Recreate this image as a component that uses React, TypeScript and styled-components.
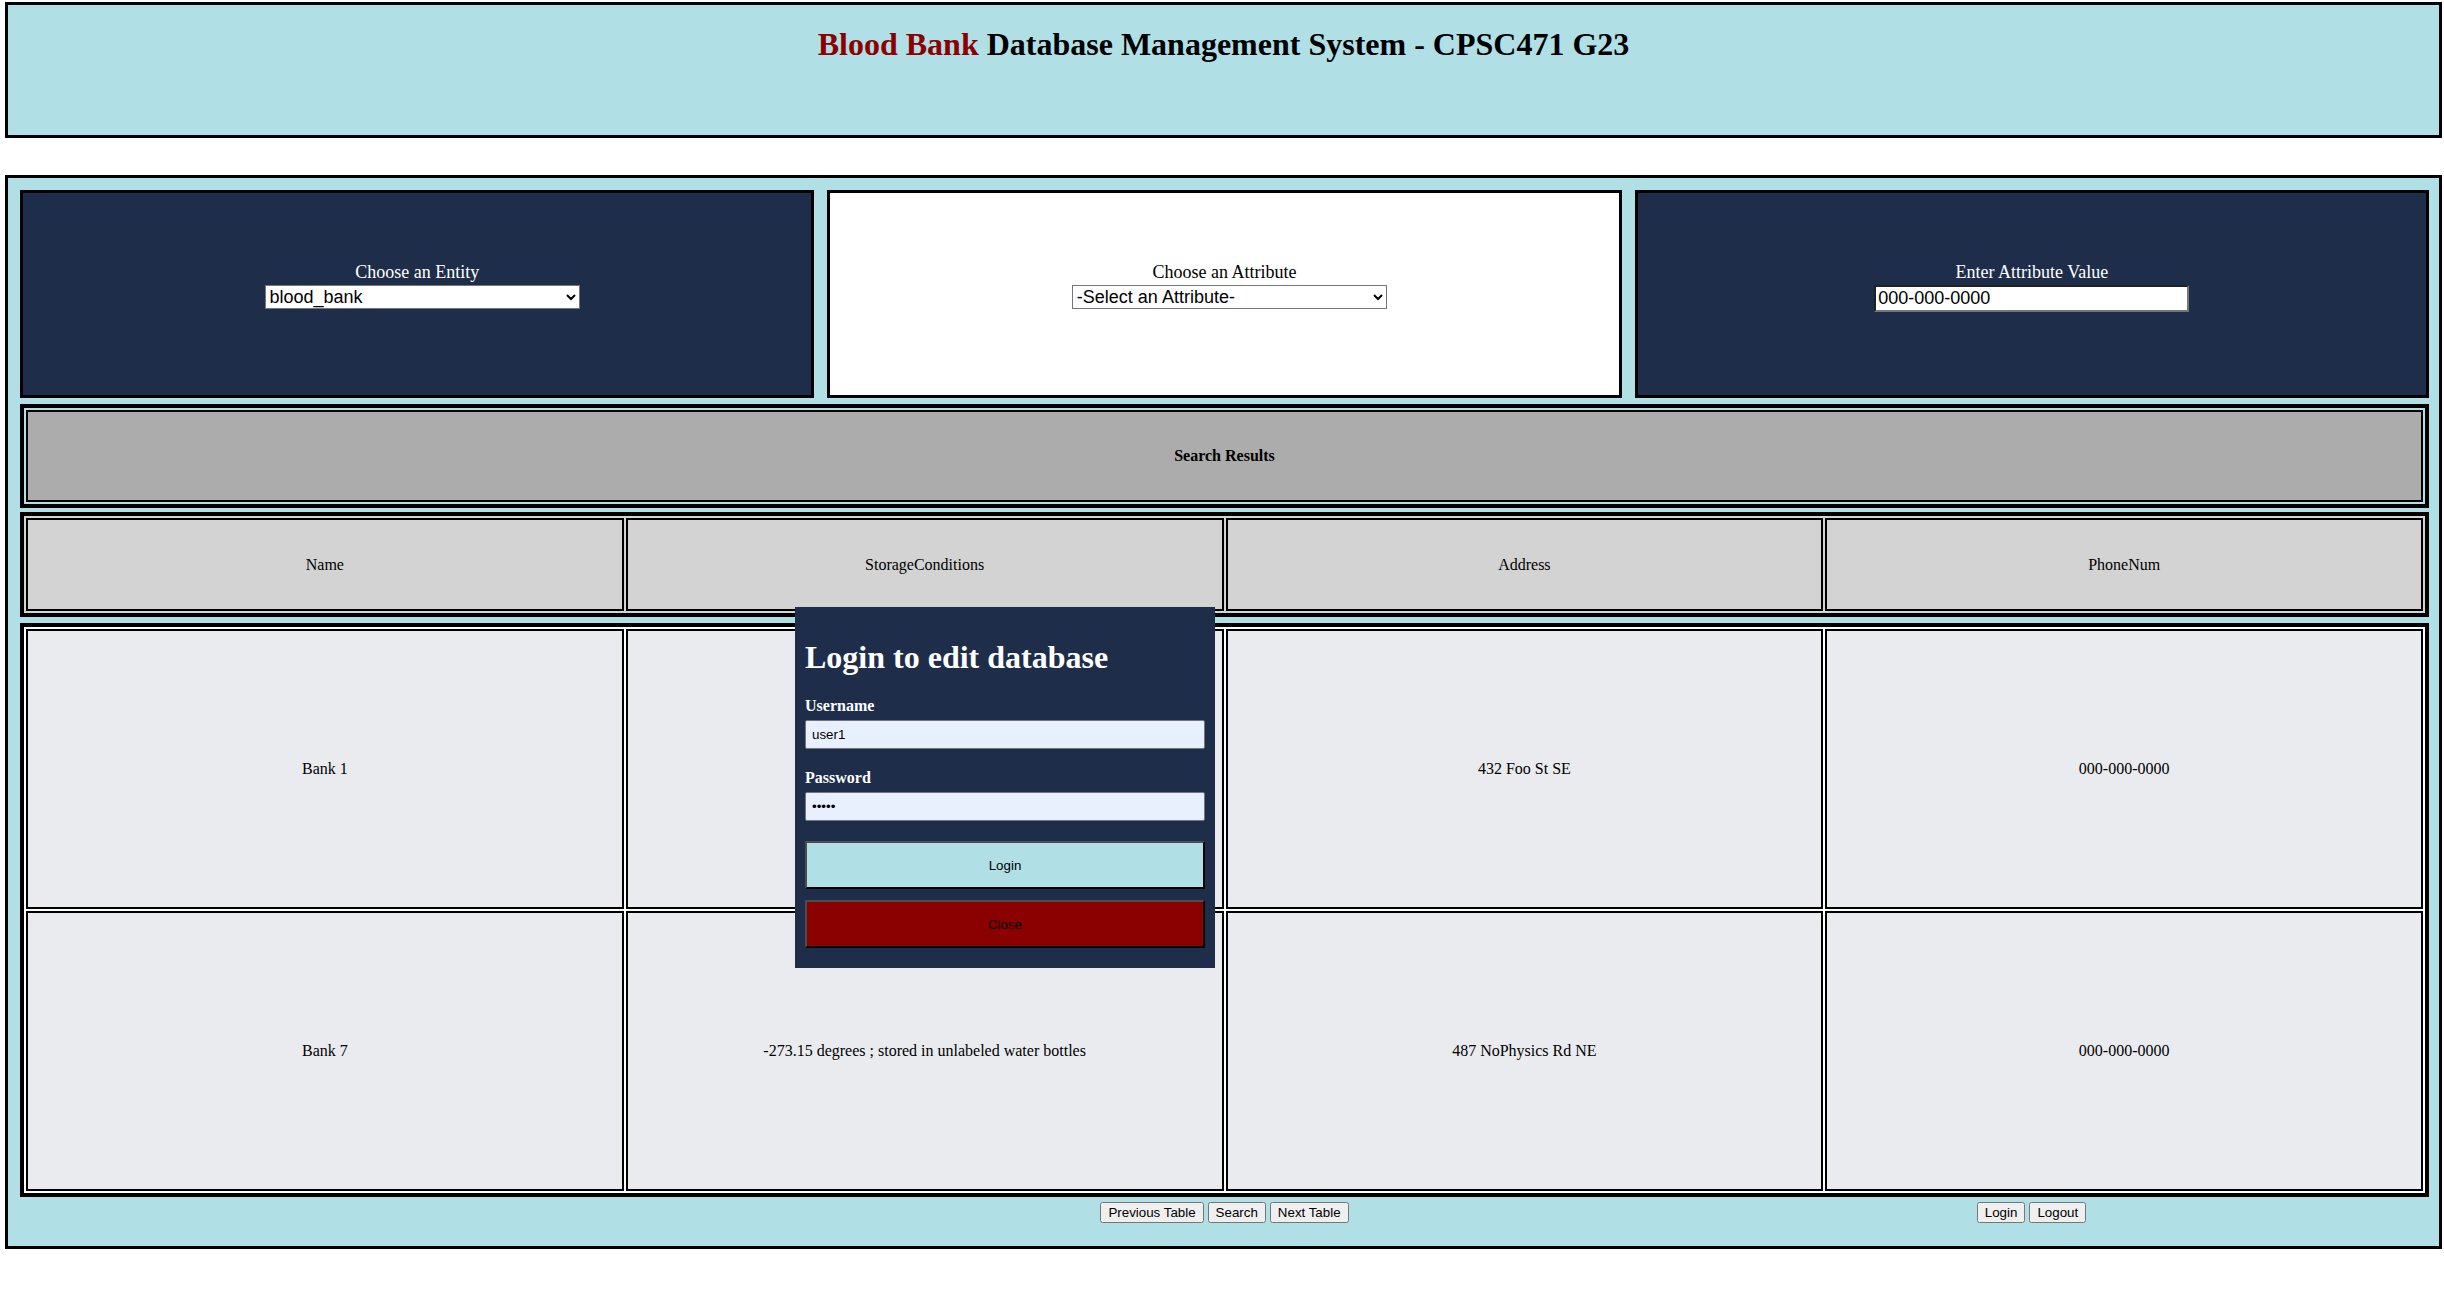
import React from "react";
import styled, { createGlobalStyle } from "styled-components";

const GlobalStyle = createGlobalStyle`
  html, body {
    margin: 0;
    padding: 0;
    background: #ffffff;
  }
  body {
    font-family: "Liberation Serif", "Times New Roman", serif;
    color: #000;
  }
`;

const NAVY = "#1e2d4a";
const POWDER = "#b0e0e6";

const Page = styled.div`
  position: relative;
  width: 2444px;
  box-sizing: border-box;
  padding: 2px 2px 40px 5px;
`;

const Header = styled.header`
  height: 136px;
  box-sizing: border-box;
  border: 3px solid #000;
  background: ${POWDER};
  text-align: center;
`;

const Title = styled.h1`
  margin: 21px 0 0;
  font-size: 32px;
  font-weight: bold;
  color: #000;
`;

const Red = styled.span`
  color: #8b0000;
`;

const Main = styled.main`
  display: block;
  margin-top: 37px;
  border: 3px solid #000;
  background: ${POWDER};
  padding: 12px 10px 23px 12px;
`;

const PanelRow = styled.div`
  display: flex;
  gap: 13px;
`;

const Panel = styled.div<{ $light?: boolean }>`
  flex: 1 1 0;
  min-width: 0;
  height: 208px;
  box-sizing: border-box;
  border: 3px solid #000;
  background: ${(p) => (p.$light ? "#ffffff" : NAVY)};
  color: ${(p) => (p.$light ? "#000000" : "#ffffff")};
  padding-top: 69px;
  text-align: center;
`;

const PanelLabel = styled.label`
  display: block;
  font-size: 18px;
  line-height: 21px;
  margin-bottom: 2px;
`;

const EntitySelect = styled.select`
  width: 40%;
  height: 24px;
  margin: 0 0 0 10px;
  font-family: "Liberation Sans", Arial, sans-serif;
  font-size: 18px;
  color: #000;
  background: #fff;
`;

const ValueInput = styled.input`
  width: 40%;
  height: 27px;
  box-sizing: border-box;
  margin: 0;
  padding: 1px 2px;
  font-family: "Liberation Sans", Arial, sans-serif;
  font-size: 18px;
  color: #000;
  background: #fff;
`;

const Grid = styled.table<{ $bg: string; $mt: number }>`
  width: 100%;
  table-layout: fixed;
  border-collapse: separate;
  border-spacing: 2px;
  border: 4px solid #000;
  background: ${(p) => p.$bg};
  margin-top: ${(p) => p.$mt}px;
`;

const Cell = styled.td<{ $bg: string; $h: number; $bold?: boolean }>`
  box-sizing: border-box;
  height: ${(p) => p.$h}px;
  border: 2px solid #000;
  background: ${(p) => p.$bg};
  padding: 0;
  text-align: center;
  vertical-align: middle;
  font-size: 16px;
  font-weight: ${(p) => (p.$bold ? "bold" : "normal")};
`;

const Footer = styled.div`
  display: grid;
  grid-template-columns: repeat(3, 1fr);
  margin-top: 5px;
  height: 21px;
`;

const ButtonGroup = styled.div<{ $col: number; $shift?: number }>`
  grid-column: ${(p) => p.$col};
  display: flex;
  justify-content: center;
  gap: 4px;
  padding-left: ${(p) => p.$shift ?? 0}px;
`;

const SmallButton = styled.button`
  height: 21px;
  margin: 0;
  font-family: "Liberation Sans", Arial, sans-serif;
  font-size: 13.333px;
`;

const Modal = styled.div`
  position: absolute;
  left: 795px;
  top: 607px;
  width: 420px;
  box-sizing: border-box;
  padding: 11px 10px 20px;
  background: ${NAVY};
  color: #fff;
`;

const ModalTitle = styled.h1`
  margin: 21px 0;
  font-size: 32px;
  font-weight: bold;
`;

const FieldLabel = styled.label`
  display: block;
  font-size: 16px;
  font-weight: bold;
  margin-bottom: 5px;
`;

const FieldInput = styled.input`
  display: block;
  width: 100%;
  height: 29px;
  box-sizing: border-box;
  margin: 0 0 20px;
  padding: 0 6px;
  border: 1px solid #767676;
  border-radius: 2px;
  background: #e8f0fe;
  color: #000;
  font-family: "Liberation Sans", Arial, sans-serif;
  font-size: 13.333px;
  outline: none;
`;

const ModalButton = styled.button<{ $danger?: boolean }>`
  display: block;
  width: 100%;
  height: 48px;
  box-sizing: border-box;
  margin: 0 0 ${(p) => (p.$danger ? 0 : 11)}px;
  border: 2px solid;
  border-color: #4d4d4d #000 #000 #4d4d4d;
  background: ${(p) => (p.$danger ? "#8b0000" : POWDER)};
  color: #000;
  font-family: "Liberation Sans", Arial, sans-serif;
  font-size: 13.333px;
`;

const columns = ["Name", "StorageConditions", "Address", "PhoneNum"];

const rows = [
  ["Bank 1", "", "432 Foo St SE", "000-000-0000"],
  [
    "Bank 7",
    "-273.15 degrees ; stored in unlabeled water bottles",
    "487 NoPhysics Rd NE",
    "000-000-0000",
  ],
];

export default function App() {
  return (
    <>
      <GlobalStyle />
      <Page>
        <Header>
          <Title>
            <Red>Blood Bank</Red> Database Management System - CPSC471 G23
          </Title>
        </Header>

        <Main>
          <PanelRow>
            <Panel>
              <PanelLabel>Choose an Entity</PanelLabel>
              <EntitySelect defaultValue="blood_bank">
                <option value="blood_bank">blood_bank</option>
                <option value="donor">donor</option>
                <option value="recipient">recipient</option>
              </EntitySelect>
            </Panel>
            <Panel $light>
              <PanelLabel>Choose an Attribute</PanelLabel>
              <EntitySelect defaultValue="">
                <option value="">-Select an Attribute-</option>
                <option value="Name">Name</option>
                <option value="PhoneNum">PhoneNum</option>
              </EntitySelect>
            </Panel>
            <Panel>
              <PanelLabel>Enter Attribute Value</PanelLabel>
              <ValueInput type="text" defaultValue="000-000-0000" />
            </Panel>
          </PanelRow>

          <Grid $bg="transparent" $mt={6}>
            <tbody>
              <tr>
                <Cell $bg="#acacac" $h={92} $bold>
                  Search Results
                </Cell>
              </tr>
            </tbody>
          </Grid>

          <Grid $bg="#d3d3d3" $mt={4}>
            <tbody>
              <tr>
                {columns.map((c) => (
                  <Cell key={c} $bg="#d3d3d3" $h={93}>
                    {c}
                  </Cell>
                ))}
              </tr>
            </tbody>
          </Grid>

          <Grid $bg="#ffffff" $mt={6}>
            <tbody>
              {rows.map((r, i) => (
                <tr key={i}>
                  {r.map((v, j) => (
                    <Cell key={j} $bg="#eaebef" $h={280}>
                      {v}
                    </Cell>
                  ))}
                </tr>
              ))}
            </tbody>
          </Grid>

          <Footer>
            <ButtonGroup $col={2}>
              <SmallButton>Previous Table</SmallButton>
              <SmallButton>Search</SmallButton>
              <SmallButton>Next Table</SmallButton>
            </ButtonGroup>
            <ButtonGroup $col={3} $shift={8}>
              <SmallButton>Login</SmallButton>
              <SmallButton>Logout</SmallButton>
            </ButtonGroup>
          </Footer>
        </Main>

        <Modal>
          <ModalTitle>Login to edit database</ModalTitle>
          <FieldLabel>Username</FieldLabel>
          <FieldInput type="text" defaultValue="user1" />
          <FieldLabel>Password</FieldLabel>
          <FieldInput type="password" defaultValue="12345" />
          <ModalButton>Login</ModalButton>
          <ModalButton $danger>Close</ModalButton>
        </Modal>
      </Page>
    </>
  );
}
